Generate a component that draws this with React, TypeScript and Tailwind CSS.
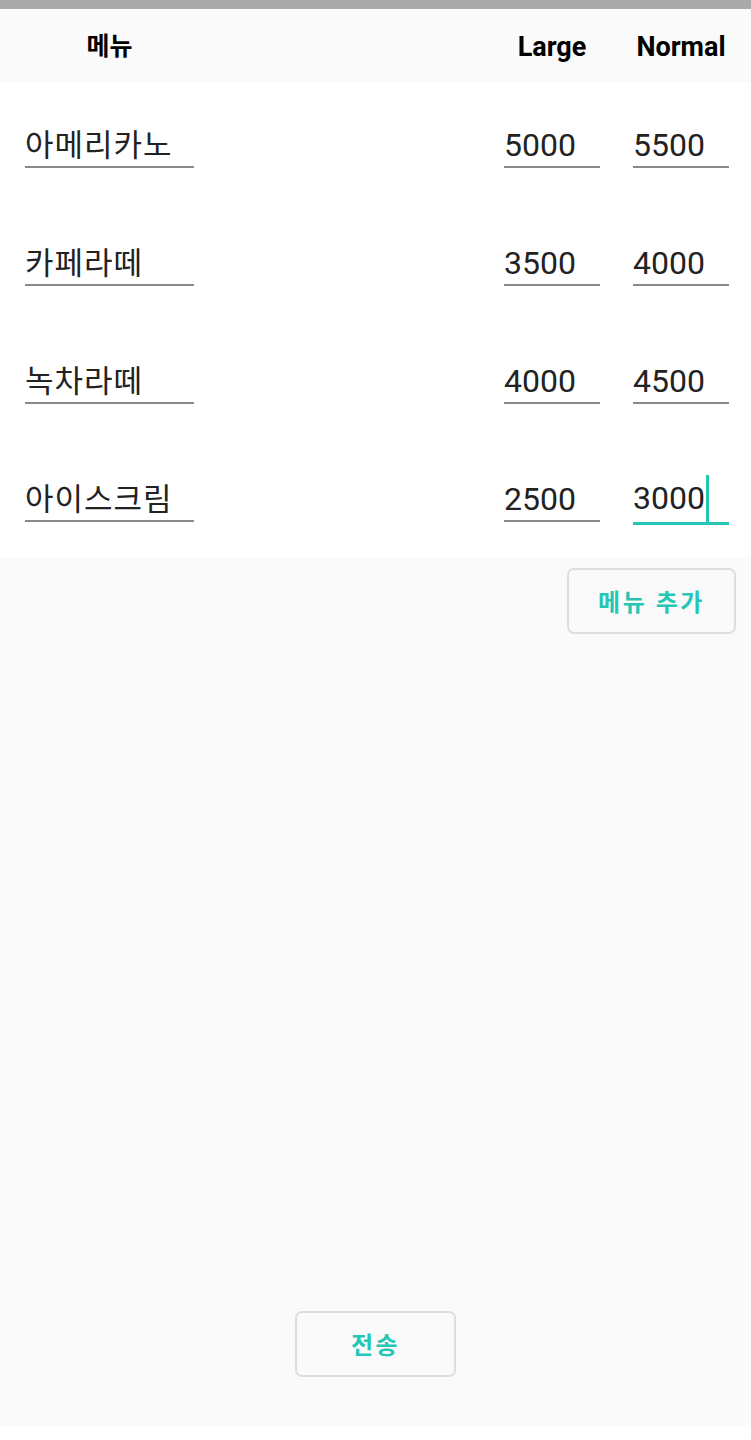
import React from "react";

const rows = [
  { name: "아메리카노", large: "5000", normal: "5500" },
  { name: "카페라떼", large: "3500", normal: "4000" },
  { name: "녹차라떼", large: "4000", normal: "4500" },
  { name: "아이스크림", large: "2500", normal: "3000", active: true },
];

const font = { fontFamily: "Roboto, 'Noto Sans CJK KR', sans-serif" };

export default function App() {
  return (
    <div className="w-[751px] h-[1440px] flex flex-col bg-white" style={font}>
      <div className="h-[9px] bg-[#a9a9a9]" />
      <div className="h-[73px] bg-[#fafafa] flex items-center pl-[25px] pr-[22px] pt-[3px]">
        <div className="w-[169px] text-center text-[25px] font-bold text-black">메뉴</div>
        <div className="flex-1" />
        <div className="w-[96px] text-center text-[27px] font-bold text-black">Large</div>
        <div className="w-[33px]" />
        <div className="w-[96px] text-center text-[27px] font-bold text-black">Normal</div>
      </div>
      <div className="bg-white pb-[3px]">
        {rows.map((r) => (
          <div key={r.name} className="h-[118px] flex items-start pl-[25px] pr-[22px]">
            <div className="w-[169px] mt-[36px] h-[50px] border-b-2 border-[#8a8a8a] flex items-end pb-[5px]">
              <span className="text-[31px] leading-none text-[#222] tracking-[1px]">{r.name}</span>
            </div>
            <div className="flex-1" />
            <div className="w-[96px] mt-[36px] h-[50px] border-b-2 border-[#8a8a8a] flex items-end pb-[5px]">
              <span className="text-[32px] leading-none text-[#222]">{r.large}</span>
            </div>
            <div className="w-[33px]" />
            {r.active ? (
              <div className="w-[96px] mt-[36px] h-[53px] border-b-[3px] border-[#26c6b6] flex items-end pb-[8px]">
                <span className="text-[32px] leading-none text-[#222]">{r.normal}</span>
                <span className="w-[3px] h-[47px] bg-[#26c6b6] mb-[-8px] ml-[1px]" />
              </div>
            ) : (
              <div className="w-[96px] mt-[36px] h-[50px] border-b-2 border-[#8a8a8a] flex items-end pb-[5px]">
                <span className="text-[32px] leading-none text-[#222]">{r.normal}</span>
              </div>
            )}
          </div>
        ))}
      </div>
      <div className="flex-1 bg-[#fafafa] flex flex-col">
        <div className="flex justify-end pr-[15px] pt-[11px]">
          <button className="w-[169px] h-[66px] rounded-[7px] border-2 border-[#dedede] bg-[#fafafa] text-[#26c6b6] text-[24px] font-bold tracking-[2.5px] pt-[3px]">
            메뉴 추가
          </button>
        </div>
        <div className="flex-1" />
        <div className="flex justify-center pb-[48px]">
          <button className="w-[161px] h-[66px] rounded-[7px] border-2 border-[#dedede] bg-[#fafafa] text-[#26c6b6] text-[24px] font-bold tracking-[2.5px] pt-[3px]">
            전송
          </button>
        </div>
      </div>
      <div className="h-[15px] bg-white" />
    </div>
  );
}
